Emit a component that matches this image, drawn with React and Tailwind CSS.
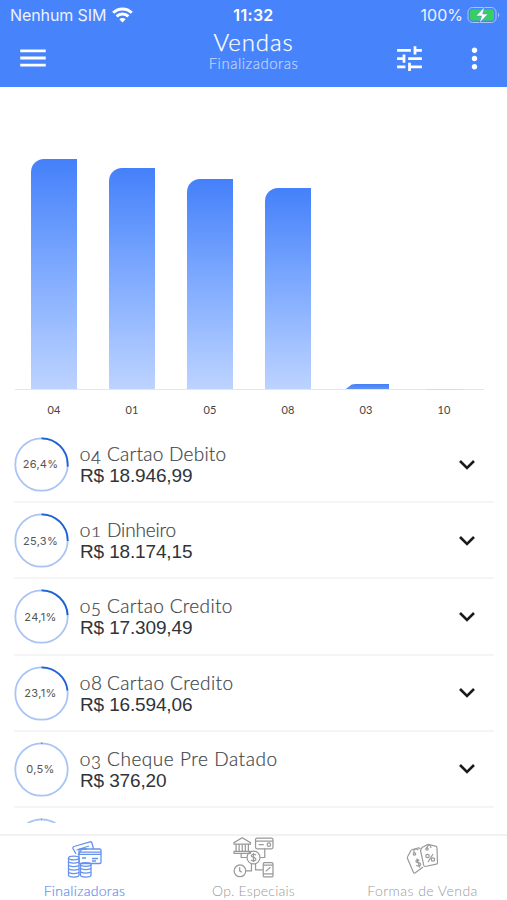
import { MdTune, MdMoreVert, MdMenu } from "react-icons/md";

const bars = [
  { code: "04", height: 230 },
  { code: "01", height: 221 },
  { code: "05", height: 210 },
  { code: "08", height: 201 },
  { code: "03", height: 5 },
  { code: "10", height: 1 },
];

const items = [
  { code: "04", name: "Cartao Debito", value: "18.946,99", percent: 26.4, spacing: "tracking-[0.25px]" },
  { code: "01", name: "Dinheiro", value: "18.174,15", percent: 25.3, spacing: "tracking-[-0.15px]" },
  { code: "05", name: "Cartao Credito", value: "17.309,49", percent: 24.1, spacing: "tracking-[0.35px]" },
  { code: "08", name: "Cartao Credito", value: "16.594,06", percent: 23.1, spacing: "tracking-[0.4px]" },
  { code: "03", name: "Cheque Pre Datado", value: "376,20", percent: 0.5, spacing: "tracking-[0.55px]" },
];

// Old style figures: 0 and 1 sit at x-height, 3 to 5 hang below the line
function Code({ value }) {
  return (
    <span className="flex w-[22px] shrink-0 items-baseline">
      {value.split("").map((d, i) => (
        <span
          key={i}
          className={
            "01".includes(d)
              ? "w-[11px] origin-left scale-x-120 text-[14.5px] leading-none"
              : d === "8"
              ? "w-[11px] text-[19px] leading-none"
              : "relative top-[3px] w-[11px] text-[17px] leading-none"
          }
        >
          {d}
        </span>
      ))}
    </span>
  );
}

function Ring({ percent }) {
  return (
    <svg width="55" height="55" viewBox="0 0 55 55" fill="none" strokeWidth="1.8">
      <circle cx="27.5" cy="27.5" r="26.2" stroke="#a9c4f5" />
      <circle
        cx="27.5"
        cy="27.5"
        r="26.2"
        stroke="#1e60d5"
        pathLength="100"
        strokeDasharray={`${percent} 100`}
        transform="rotate(-90 27.5 27.5)"
      />
    </svg>
  );
}

function WifiIcon() {
  return (
    <svg width="21" height="16" viewBox="0 0 21 16" fill="none" stroke="white" strokeWidth="3">
      <path d="M1.2 5.8a13.2 13.2 0 0 1 18.6 0M4.6 9.4a8.4 8.4 0 0 1 11.8 0" />
      <path d="M10.5 15.5l-3.2-3.3a4.6 4.6 0 0 1 6.4 0z" fill="white" stroke="none" />
    </svg>
  );
}

function CardsIcon() {
  return (
    <svg width="36" height="38" viewBox="0 0 36 38" fill="none" stroke="currentColor" strokeWidth="1.3">
      <path d="M9 13 L6 7.5 Q5.5 6 7 5.5 L23 .8 Q24.5 .5 25 2 L26.5 8" />
      <path d="M9.5 9 L22 5 M11 14 L15 8 L20 8" />
      <rect x="12" y="8" width="22" height="14.5" rx="1.2" />
      <path d="M12 11.2h22M12 13.4h22M25 17.5h6M25 20h4M15 17h4" />
      {[17, 20.5, 24, 27.5, 31].map((y) => (
        <path key={y} d={`M1.5 ${y}v3.3c0 2.3 10.5 2.3 10.5 0v-3.3`} />
      ))}
      <ellipse cx="6.75" cy="17" rx="5.25" ry="1.8" />
      {[23.5, 27, 31].map((y) => (
        <path key={y} d={`M13.5 ${y}v3.3c0 2.3 10.5 2.3 10.5 0v-3.3`} />
      ))}
      <ellipse cx="18.75" cy="23.5" rx="5.25" ry="1.8" />
    </svg>
  );
}

function NetworkIcon() {
  return (
    <svg width="41" height="41" viewBox="0 0 40 40" fill="none" stroke="currentColor" strokeWidth="1.2">
      <path d="M1 5.5 L9 .8 L17 5.5 V7 H1Z M3 7v7M6 7v7M9 7v7M12 7v7M15 7v7M1 14h16v2H1z" />
      <rect x="22" y="1" width="17" height="10.5" rx="1.5" />
      <path d="M22 4h17M25 7.5h5" />
      <circle cx="35" cy="7.5" r="1.7" />
      <circle cx="20" cy="20" r="6.3" />
      <path d="M22.4 17.6c-1-1.2-4.6-1-4.6.8s4.6 1.2 4.6 3.2-3.8 2-4.8.7M20 15.5v9" />
      <path d="M8 16v4h5.5M26.5 20H31v-8.5M18 26v7h-5.5M22 26v6h7" />
      <circle cx="6.8" cy="33" r="5.7" />
      <path d="M6.5 29.5V33l2 1.5" />
      <rect x="29.5" y="25" width="9.5" height="14" rx="1.2" />
      <path d="M29.5 27.5H39M29.5 36H39M32 33.5l4.5-4" />
    </svg>
  );
}

function TagsIcon() {
  return (
    <svg width="34" height="34" viewBox="0 0 34 34" fill="none" stroke="currentColor" strokeWidth="1.2">
      <path d="M17 24 L9 30 Q8 30.5 7.5 29.5 L1.5 15.5 Q1 14.5 1.7 13.5 L5 7.5 Q5.5 6.8 6.5 6.5 L12 5 Q13 4.8 14.5 5.8" />
      <path d="M16 4.5 L22 1.5 L29.5 3.2 Q31 3.5 31 5 L31.5 20 Q31.5 21 30.3 21.2 L19 23.5 Q18 23.5 17.8 22.5 L14.5 7.5Z" />
      <circle cx="8.5" cy="11" r="1.2" />
      <circle cx="21" cy="6" r="1.2" />
      <path d="M8 10 Q7 4 12.5 7M20.5 5 Q24-1 25 5" />
      <path d="M13.4 17.5c-1.5-1.5-4-.2-3.4 1.3s4 .2 4.6 2.2-2.8 2.8-4.3 1.1M10.8 15.5l3 9" />
      <circle cx="21.5" cy="13" r="1.7" />
      <circle cx="27" cy="16.5" r="1.7" />
      <path d="M27 11l-5 8" />
    </svg>
  );
}

function App() {
  return (
    <div className="flex h-[900px] w-[507px] flex-col overflow-hidden bg-white font-['Lato','Open_Sans',sans-serif]">
      {/* Header */}
      <header className="h-[87px] shrink-0 bg-[#4783fb] text-white">
        <div className="grid h-[29px] grid-cols-3 items-center px-[6px] font-['Inter',sans-serif] text-[16px] leading-none">
          <div className="flex items-center gap-[6px] pl-[4px] text-[#edf2ff]">
            <span className="whitespace-nowrap tracking-[-0.1px]">Nenhum SIM</span>
            <WifiIcon />
          </div>
          <span className="text-center font-semibold tracking-[0.3px]">11:32</span>
          <div className="flex items-center justify-end gap-[4px] text-[#edf2ff]">
            <span>100%</span>
            <svg width="34" height="18" viewBox="0 0 34 18">
              <rect x="1" y="1.5" width="28" height="15" rx="4.5" fill="none" stroke="#a9c5fb" />
              <rect x="3" y="3.5" width="24" height="11" rx="2.5" fill="#37cf64" />
              <path d="M31 6.5q2.5 2.5 0 5z" fill="#a9c5fb" />
              <path d="M17.5 1 9 10h5.5L12.5 17 21 8h-5.3z" fill="white" stroke="#4783fb" strokeWidth=".5" />
            </svg>
          </div>
        </div>
        <div className="flex h-[58px] items-center">
          <div className="w-[150px] pl-[16px]">
            <MdMenu size={34} />
          </div>
          <div className="flex grow flex-col items-center self-start">
            <h1 className="text-[24px] leading-[25px] font-light tracking-[0.9px] [-webkit-text-stroke:0.25px]">Vendas</h1>
            <p className="text-[15px] leading-[18px] font-light tracking-[0.5px] text-[#c2d5fe] [-webkit-text-stroke:0.2px]">
              Finalizadoras
            </p>
          </div>
          <div className="flex w-[150px] items-center justify-end gap-[32px] pr-[16px]">
            <MdTune size={33} />
            <MdMoreVert size={33} />
          </div>
        </div>
      </header>

      {/* Chart */}
      <section className="h-[340px] shrink-0 pt-[72px] pl-[15px]">
        <div className="flex h-[231px] w-[469px] items-end border-b border-[#dce7fd]">
          {bars.map((bar) => (
            <div key={bar.code} className="flex w-[78px] justify-center">
              <div
                className={`bg-linear-to-b ${
                  bar.height > 100
                    ? "w-[46.5px] rounded-tl-[13px] from-[#4480fa] to-[#bdd3ff]"
                    : bar.height > 1
                    ? "w-[46.5px] from-[#4480fa] to-[#5f92f5] [clip-path:polygon(3px_100%,9px_10%,13px_0,100%_0,100%_100%)]"
                    : "w-[37px] translate-y-px from-[#cbdcfc] to-[#cbdcfc]"
                }`}
                style={{ height: bar.height }}
              />
            </div>
          ))}
        </div>
        <div className="flex pt-[13px]">
          {bars.map((bar) => (
            <span key={bar.code} className="w-[78px] text-center text-[11px] leading-[14px] text-[#444]">
              {bar.code}
            </span>
          ))}
        </div>
      </section>

      {/* List */}
      <main className="h-[396px] shrink-0 overflow-hidden pr-[13px] pl-[14px]">
        {items.map((item) => (
          <div
            key={item.code}
            className="flex h-[76.2px] items-center border-b-2 border-[#f5f5f5] pt-px"
          >
            <div className="grid shrink-0 place-items-center *:col-start-1 *:row-start-1">
              <Ring percent={item.percent} />
              <span className="relative left-[-1px] font-['Inter',sans-serif] text-[11px] tracking-[0.3px] text-[#555]">
                {item.percent.toFixed(1).replace(".", ",")}%
              </span>
            </div>
            <div className="ml-[11px] grow pt-px">
              <p className="flex h-[22px] items-baseline gap-[5px] text-[19px] leading-[22px] font-light text-[#414549] [-webkit-text-stroke:0.2px]">
                <Code value={item.code} />
                <span className={`whitespace-nowrap ${item.spacing}`}>{item.name}</span>
              </p>
              <p className="font-['Liberation_Sans',sans-serif] text-[19px] leading-[22px] tracking-[-0.15px] text-[#30343a]">
                R$ {item.value}
              </p>
            </div>
            <svg width="18" height="12" viewBox="0 0 18 12" className="mr-[18px]" fill="none" stroke="#1b1b1b" strokeWidth="2.6">
              <path d="M2 2l7 7 7-7" />
            </svg>
          </div>
        ))}
        <div className="pt-[10px]">
          <Ring percent={0.3} />
        </div>
      </main>

      {/* Tabs */}
      <nav className="mt-[11px] grid h-[66px] shrink-0 grid-cols-3 border-t-2 border-[#f2f2f2] text-[14px] font-light">
        <div className="flex flex-col items-center text-[#6692ee]">
          <div className="flex h-[47px] items-center"><CardsIcon /></div>
          <span className="leading-[16px] tracking-[0.3px] [-webkit-text-stroke:0.2px]">Finalizadoras</span>
        </div>
        <div className="flex flex-col items-center text-[#999]">
          <div className="flex h-[47px] items-center pb-[5px]"><NetworkIcon /></div>
          <span className="leading-[16px] tracking-[0.2px]">Op. Especiais</span>
        </div>
        <div className="flex flex-col items-center text-[#999]">
          <div className="flex h-[47px] items-center"><TagsIcon /></div>
          <span className="leading-[16px] tracking-[0.45px]">Formas de Venda</span>
        </div>
      </nav>
    </div>
  );
}

export default App;
